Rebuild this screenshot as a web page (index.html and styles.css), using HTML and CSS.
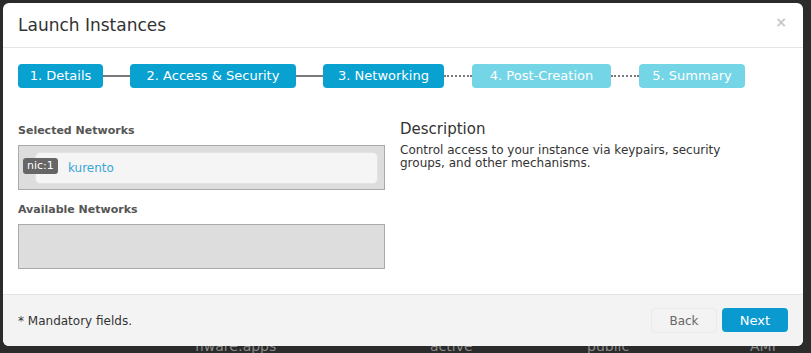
FILE: index.html
```html
<!DOCTYPE html>
<html lang="en">
<head>
    <meta charset="UTF-8">
    <meta name="viewport" content="width=device-width, initial-scale=1.0">
    <title>Launch Instances</title>
    <link rel="stylesheet" href="styles.css">
</head>
<body>
    <div class="page-row">
        <span class="c1">fiware:apps</span>
        <span class="c2">active</span>
        <span class="c3">public</span>
        <span class="c4">AMI</span>
    </div>

    <div class="modal">
        <div class="modal-header">
            <h3>Launch Instances</h3>
            <span class="close">&times;</span>
        </div>

        <div class="modal-body">
            <div class="wizard">
                <div class="step done s1">1. Details</div>
                <div class="link"></div>
                <div class="step done s2">2. Access &amp; Security</div>
                <div class="link"></div>
                <div class="step done s3">3. Networking</div>
                <div class="link dotted"></div>
                <div class="step todo s4">4. Post-Creation</div>
                <div class="link dotted"></div>
                <div class="step todo s5">5. Summary</div>
            </div>

            <div class="columns">
                <div class="networks">
                    <label>Selected Networks</label>
                    <div class="net-box">
                        <div class="net-item">
                            <span class="nic">nic:1</span>
                            <span class="net-name">kurento</span>
                        </div>
                    </div>
                    <label>Available Networks</label>
                    <div class="net-box empty"></div>
                </div>
                <div class="description">
                    <h4>Description</h4>
                    <p>Control access to your instance via keypairs, security groups, and other mechanisms.</p>
                </div>
            </div>
        </div>

        <div class="modal-footer">
            <span class="mandatory">* Mandatory fields.</span>
            <div class="buttons">
                <button class="btn back">Back</button>
                <button class="btn next">Next</button>
            </div>
        </div>
    </div>
</body>
</html>
```

FILE: styles.css
```css
body {
    font-family: "DejaVu Sans", sans-serif;
    background-color: #2b2b2b;
    margin: 0;
    padding: 0;
    height: 353px;
    overflow: hidden;
    position: relative;
}

/* table of the page behind the dialog */
.page-row {
    display: flex;
    padding-top: 338px;
    font-size: 14px;
    line-height: 16px;
    color: #8a8a8a;
}
.page-row span {
    display: block;
}
.c1 { margin-left: 195px; width: 235px; }
.c2 { width: 157px; }
.c3 { width: 163px; }

.modal {
    position: absolute;
    top: 3px;
    left: 3px;
    width: 800px;
    height: 343px;
    background-color: #fff;
    border-radius: 6px;
    display: flex;
    flex-direction: column;
    overflow: hidden;
}

.modal-header {
    height: 44px;
    border-bottom: 1px solid #e5e5e5;
    display: flex;
    align-items: center;
    justify-content: space-between;
    padding: 0 16px 0 15px;
}
.modal-header h3 {
    margin: 0;
    font-size: 17px;
    font-weight: normal;
    color: #333;
}
.close {
    color: #c8c8c8;
    font-size: 14px;
    font-weight: bold;
    margin-top: -6px;
}

.modal-body {
    flex: 1;
    padding: 16px 15px 0 15px;
}

.wizard {
    display: flex;
    align-items: center;
    height: 24px;
}
.step {
    height: 24px;
    line-height: 24px;
    border-radius: 4px;
    color: #fff;
    font-size: 13px;
    text-align: center;
    box-sizing: border-box;
}
.done {
    background-color: #08a1d0;
}
.todo {
    background-color: #74d5e7;
}
.s1 { width: 85px; }
.s2 { width: 166px; }
.s3 { width: 121px; }
.s4 { width: 139px; }
.s5 { width: 106px; }

.link {
    width: 27px;
    height: 0;
    border-top: 2px solid #7a7a7a;
}
.link.dotted {
    width: 28px;
    border-top: 2px dotted #7a7a7a;
}

.columns {
    display: flex;
    margin-top: 36px;
}
.networks {
    width: 367px;
}
.networks label {
    display: block;
    font-size: 11px;
    font-weight: bold;
    color: #555;
    height: 14px;
    line-height: 14px;
    margin-bottom: 7px;
}
.net-box {
    background-color: #dddddd;
    border: 1px solid #aaaaaa;
    box-sizing: border-box;
    height: 45px;
    padding: 6px 6px 0 4px;
    margin-bottom: 13px;
}
.net-item {
    position: relative;
    margin-left: 12px;
    height: 32px;
    background-color: #f5f5f5;
    border: 1px solid #e2e2e2;
    border-radius: 5px;
    box-sizing: border-box;
    display: flex;
    align-items: center;
    padding-left: 32px;
}
.nic {
    position: absolute;
    left: -13px;
    top: 5px;
    background-color: #666;
    color: #fff;
    font-size: 11px;
    height: 16px;
    line-height: 16px;
    padding: 0 4px;
    border-radius: 3px;
}
.net-name {
    color: #3aa6d5;
    font-size: 12px;
}

.description {
    margin-left: 15px;
    margin-top: -4px;
}
.description h4 {
    margin: 0;
    font-size: 15px;
    line-height: 18px;
    font-weight: normal;
    color: #333;
}
.description p {
    margin: 6px 0 0 0;
    font-size: 12px;
    line-height: 13px;
    color: #333;
    width: 345px;
}

.modal-footer {
    height: 51px;
    background-color: #f3f3f3;
    border-top: 1px solid #e3e3e3;
    display: flex;
    align-items: center;
    justify-content: space-between;
    padding: 0 15px;
}
.mandatory {
    font-size: 12px;
    color: #333;
}
.buttons {
    display: flex;
    gap: 5px;
}
.btn {
    font-family: inherit;
    width: 66px;
    height: 24px;
    border-radius: 4px;
    font-size: 12px;
    cursor: pointer;
}
.back {
    background-color: #f3f3f3;
    border: 1px solid #ebebeb;
    color: #666;
    height: 25px;
}
.next {
    background-color: #0a9ad0;
    border: none;
    color: #fff;
    font-size: 13px;
}
```
